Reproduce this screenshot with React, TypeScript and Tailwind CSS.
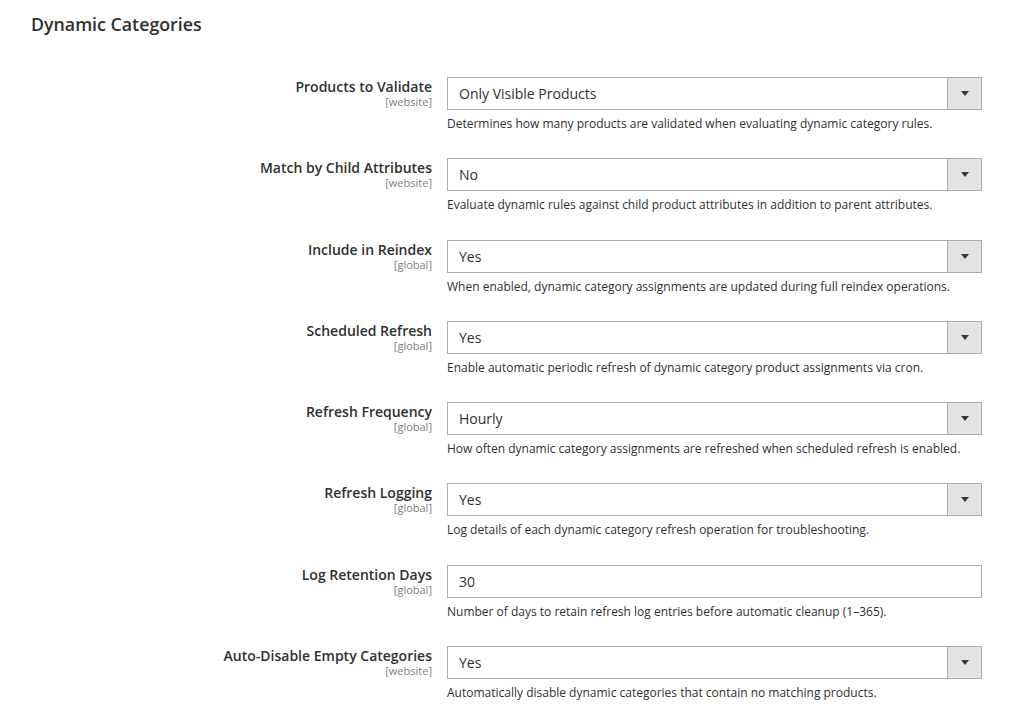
type Field = {
  label: string;
  scope: string;
  value: string;
  note: string;
  input?: boolean;
};

const fields: Field[] = [
  {
    label: "Products to Validate",
    scope: "[website]",
    value: "Only Visible Products",
    note: "Determines how many products are validated when evaluating dynamic category rules.",
  },
  {
    label: "Match by Child Attributes",
    scope: "[website]",
    value: "No",
    note: "Evaluate dynamic rules against child product attributes in addition to parent attributes.",
  },
  {
    label: "Include in Reindex",
    scope: "[global]",
    value: "Yes",
    note: "When enabled, dynamic category assignments are updated during full reindex operations.",
  },
  {
    label: "Scheduled Refresh",
    scope: "[global]",
    value: "Yes",
    note: "Enable automatic periodic refresh of dynamic category product assignments via cron.",
  },
  {
    label: "Refresh Frequency",
    scope: "[global]",
    value: "Hourly",
    note: "How often dynamic category assignments are refreshed when scheduled refresh is enabled.",
  },
  {
    label: "Refresh Logging",
    scope: "[global]",
    value: "Yes",
    note: "Log details of each dynamic category refresh operation for troubleshooting.",
  },
  {
    label: "Log Retention Days",
    scope: "[global]",
    value: "30",
    note: "Number of days to retain refresh log entries before automatic cleanup (1–365).",
    input: true,
  },
  {
    label: "Auto-Disable Empty Categories",
    scope: "[website]",
    value: "Yes",
    note: "Automatically disable dynamic categories that contain no matching products.",
  },
];

function Control({ field }: { field: Field }) {
  if (field.input) {
    return (
      <div className="h-[33px] border border-[#adadad] bg-white flex items-center px-[11px] text-[14px] text-[#303030]">
        {field.value}
      </div>
    );
  }
  return (
    <div className="h-[33px] border border-[#adadad] bg-white flex">
      <div className="flex-1 flex items-center px-[11px] text-[14px] text-[#303030]">
        {field.value}
      </div>
      <div className="w-[34px] bg-[#e3e3e3] border-l border-[#adadad] flex items-center justify-center">
        <svg width="8" height="5" viewBox="0 0 8 5">
          <path d="M0 0h8L4 5z" fill="#41362f" />
        </svg>
      </div>
    </div>
  );
}

export default function App() {
  return (
    <div
      className="w-[1009px] h-[721px] bg-white overflow-hidden text-[#303030]"
      style={{ fontFamily: '"Open Sans", "Noto Sans", sans-serif' }}
    >
      <h2 className="pl-[31px] pt-[11px] text-[17.8px] leading-[26px] font-semibold text-[#303030]">
        Dynamic Categories
      </h2>
      <div className="mt-[40px] flex flex-col gap-[25.3px]">
        {fields.map((f) => (
          <div key={f.label} className="flex">
            <div className="w-[447px] pr-[15px] text-right pt-[1px]">
              <div className="text-[14px] leading-[18px] font-semibold text-[#303030]">
                {f.label}
              </div>
              <div className="text-[11px] leading-[12px] text-[#808080]">
                {f.scope}
              </div>
            </div>
            <div className="w-[535px]">
              <Control field={f} />
              <div className="mt-[5px] text-[12px] leading-[18px] text-[#303030]">
                {f.note}
              </div>
            </div>
          </div>
        ))}
      </div>
    </div>
  );
}
